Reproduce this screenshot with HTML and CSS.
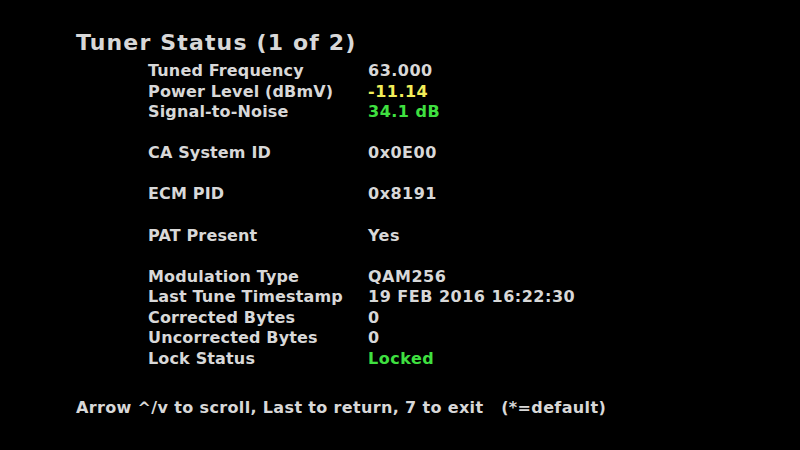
FILE: index.html
```html
<!DOCTYPE html>
<html>
<head>
<meta charset="utf-8">
<link rel="stylesheet" href="styles.css">
</head>
<body>
<div class="screen">
  <h1 class="title">Tuner Status (1 of 2)</h1>
  <div class="table">
    <div class="row"><span class="label">Tuned Frequency</span><span class="value">63.000</span></div>
    <div class="row"><span class="label">Power Level (dBmV)</span><span class="value yellow">-11.14</span></div>
    <div class="row"><span class="label">Signal-to-Noise</span><span class="value green">34.1 dB</span></div>
    <div class="row blank"></div>
    <div class="row"><span class="label">CA System ID</span><span class="value">0x0E00</span></div>
    <div class="row blank"></div>
    <div class="row"><span class="label">ECM PID</span><span class="value">0x8191</span></div>
    <div class="row blank"></div>
    <div class="row"><span class="label">PAT Present</span><span class="value">Yes</span></div>
    <div class="row blank"></div>
    <div class="row"><span class="label">Modulation Type</span><span class="value">QAM256</span></div>
    <div class="row"><span class="label">Last Tune Timestamp</span><span class="value">19 FEB 2016 16:22:30</span></div>
    <div class="row"><span class="label">Corrected Bytes</span><span class="value">0</span></div>
    <div class="row"><span class="label">Uncorrected Bytes</span><span class="value">0</span></div>
    <div class="row"><span class="label">Lock Status</span><span class="value green">Locked</span></div>
  </div>
  <div class="footer">Arrow ^/v to scroll, Last to return, 7 to exit&nbsp;&nbsp;&nbsp;(*=default)</div>
</div>
</body>
</html>
```
FILE: styles.css
```css
html, body {
  margin: 0;
  padding: 0;
  background: #000;
}
.screen {
  width: 800px;
  height: 450px;
  box-sizing: border-box;
  padding: 28px 0 0 76px;
  font-family: "DejaVu Sans", sans-serif;
  font-weight: bold;
  color: #d8d8d8;
}
.title {
  margin: 0;
  font-size: 22px;
  font-weight: bold;
  letter-spacing: 1.15px;
  line-height: 30px;
}
.table {
  margin: 3px 0 0 72px;
}
.row {
  display: grid;
  grid-template-columns: 220px auto;
  height: 20.57px;
  line-height: 20.57px;
  font-size: 16px;
  letter-spacing: 0.15px;
}
.value {
  letter-spacing: 0.5px;
}
.yellow { color: #f2ee5a; }
.green { color: #3fe040; }
.footer {
  margin-top: 29px;
  font-size: 16px;
  letter-spacing: 0.35px;
}
```
